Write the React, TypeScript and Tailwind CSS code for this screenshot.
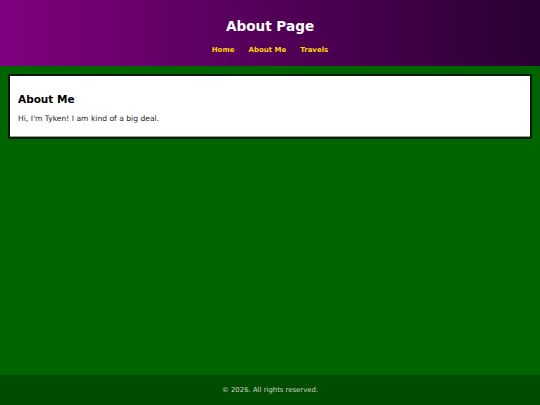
export default function App() {
  return (
    <div className="flex min-h-[405px] flex-col bg-[#006400] font-['DejaVu_Sans',Verdana,sans-serif]">
      <header className="h-[66px] bg-gradient-to-r from-[#800080] to-[#2a0033] pt-[17px] text-center">
        <h1 className="text-[13.6px] font-bold leading-[18px] text-white">About Page</h1>
        <nav className="mt-[10px] flex justify-center gap-[14px] text-[7px] font-bold leading-[10px] text-[#ffd700]">
          <a href="#">Home</a>
          <a href="#">About Me</a>
          <a href="#">Travels</a>
        </nav>
      </header>
      <main className="flex-1 px-[8px] pt-[8px]">
        <section className="border-2 border-[#0a1a0a] bg-white px-[8px] pb-[13px] pt-[16px] shadow-[inset_0_-1px_0_#999]">
          <h2 className="text-[10.5px] font-bold leading-[14px] text-black">About Me</h2>
          <p className="mt-[7px] text-[7.6px] leading-[11px] text-[#222]">Hi, I'm Tyken! I am kind of a big deal.</p>
        </section>
      </main>
      <footer className="flex h-[30px] items-center justify-center bg-[#004d00] pt-[1px] text-[6.9px] text-[#d0d0d0]">
        © 2026. All rights reserved.
      </footer>
    </div>
  );
}
